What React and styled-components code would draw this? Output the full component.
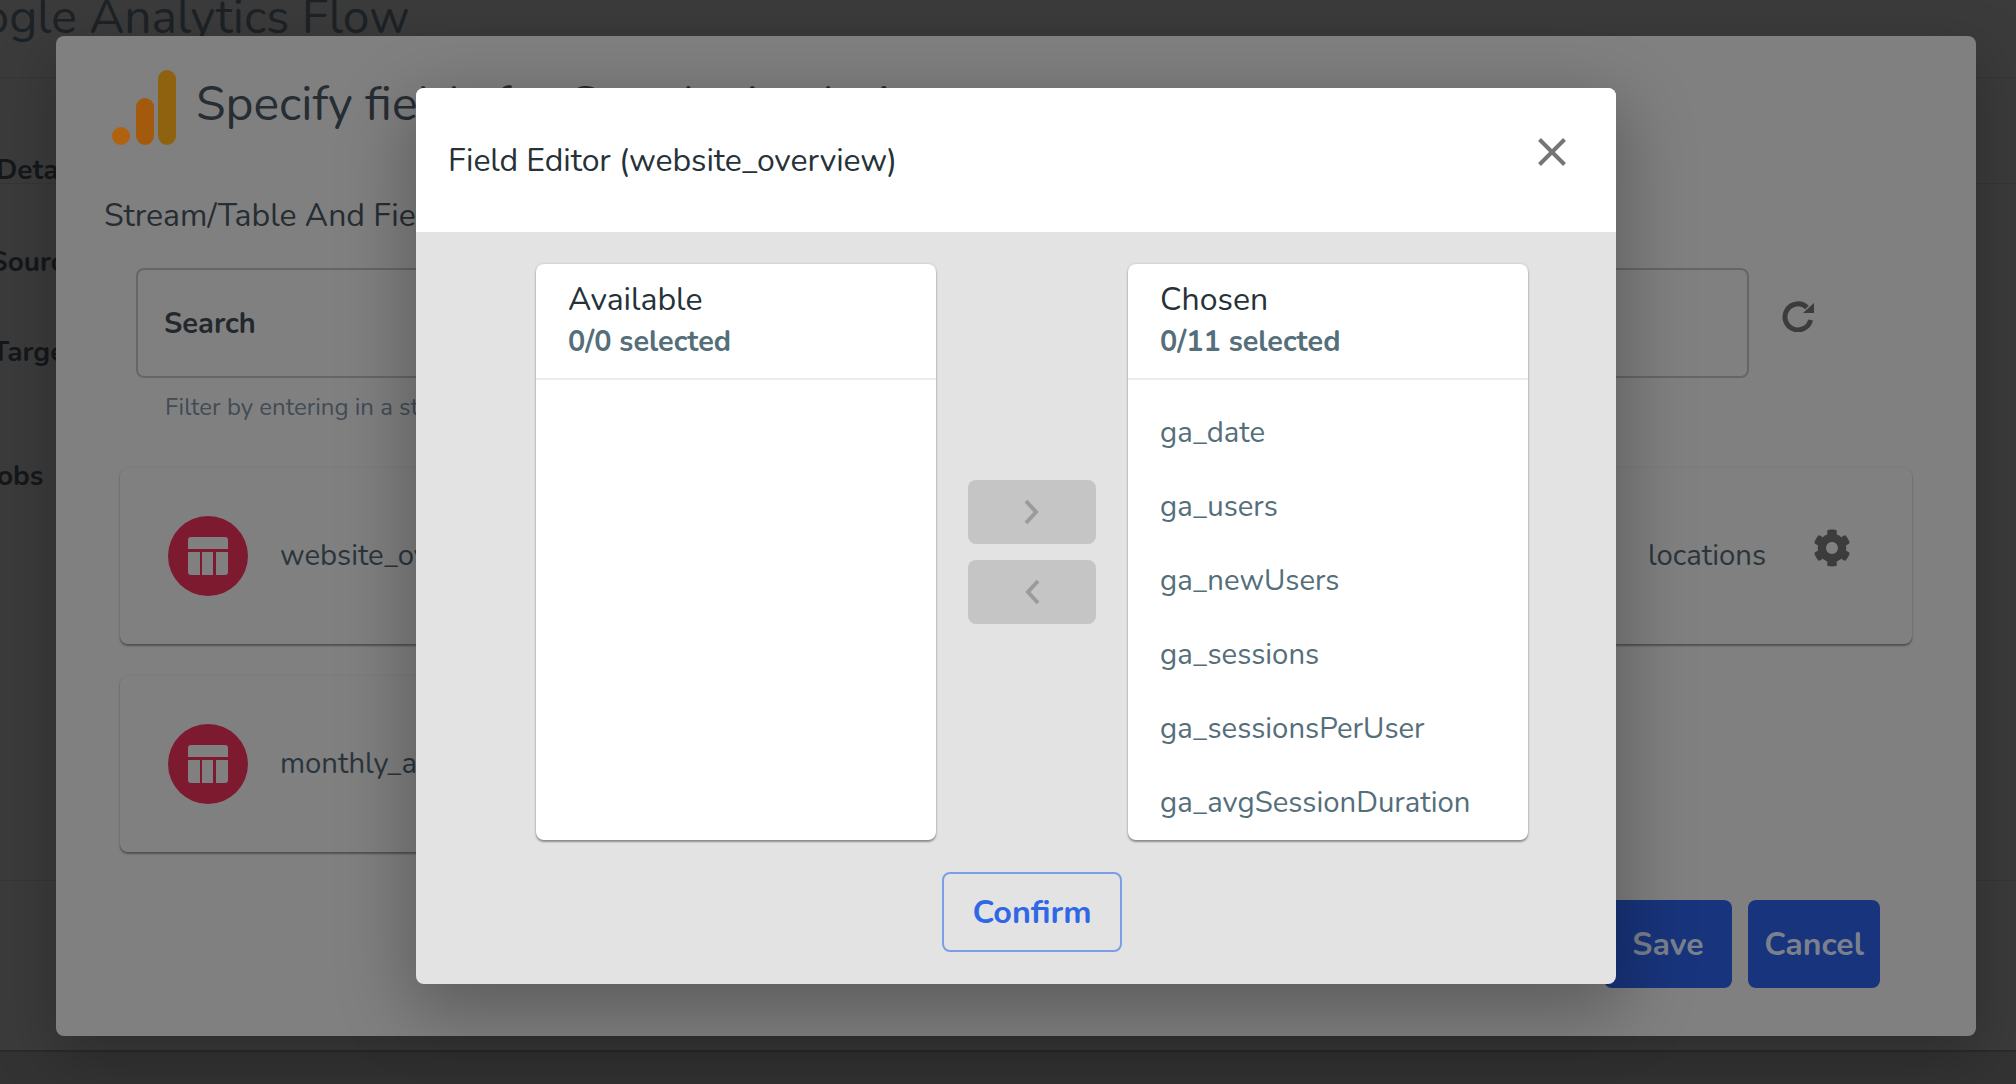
import React from 'react';
import styled, { createGlobalStyle } from 'styled-components';
import { FaCog } from 'react-icons/fa';

const FONT = `"Nunito", "Lato", "Noto Sans", sans-serif`;

const Global = createGlobalStyle`
  html, body { margin: 0; padding: 0; height: 100%; overflow: hidden; background: #3a3a3a; }
  #root { height: 100%; }
  * { box-sizing: border-box; }
`;

const Viewport = styled.div`
  position: relative;
  width: 2016px;
  height: 1084px;
  overflow: hidden;
  background: #3b3b3b;
  font-family: ${FONT};
`;

const PageTitle = styled.h1`
  position: absolute;
  left: -79px;
  top: -17px;
  margin: 0;
  font-size: 48px;
  line-height: 68px;
  font-weight: 400;
  color: #1d2226;
  white-space: nowrap;
`;

const PageRule = styled.div`
  position: absolute;
  left: 0;
  right: 0;
  top: ${p => p.$y}px;
  height: 1px;
  background: #363636;
`;

const SideNav = styled.nav`
  position: absolute;
  left: 0;
  top: 0;
  width: 70px;
  font-size: 28px;
  font-weight: 700;
  color: #14181b;
  white-space: nowrap;
`;

const SideItem = styled.div`
  position: absolute;
  left: ${p => p.$x}px;
  top: ${p => p.$y - 20}px;
  line-height: 40px;
`;

const BottomBar = styled.div`
  position: absolute;
  left: 0;
  right: 0;
  top: 1050px;
  bottom: 0;
  background: #333;
  border-top: 2px solid #2a2a2a;
`;

const FlowModal = styled.section`
  position: absolute;
  left: 56px;
  top: 36px;
  width: 1920px;
  height: 1000px;
  background: #808080;
  border-radius: 8px;
  box-shadow: 0 20px 60px rgba(0,0,0,.25);
  padding: 34px 64px 0 48px;
`;

const ModalHead = styled.div`
  display: flex;
  align-items: center;
  gap: 20px;
  margin-left: 8px;
  height: 74px;
`;

const ModalTitle = styled.h2`
  margin: -6px 0 0;
  font-size: 48px;
  font-weight: 400;
  color: #262d33;
  white-space: nowrap;
`;

const SectionLabel = styled.h3`
  margin: 52px 0 0;
  font-size: 32px;
  line-height: 40px;
  font-weight: 400;
  color: #262d33;
`;

const SearchRow = styled.div`
  display: flex;
  align-items: flex-start;
  gap: 33px;
  margin: 32px 0 0 32px;
`;

const SearchBox = styled.div`
  width: 1613px;
  height: 110px;
  border: 2px solid #666;
  border-radius: 8px;
  padding: 0 26px;
  display: flex;
  align-items: center;
  font-size: 29px;
  font-weight: 700;
  color: #22282d;
`;

const RefreshIcon = styled.svg`
  width: 32px;
  height: 32px;
  margin-top: 32px;
  flex: none;
`;

const Helper = styled.div`
  margin: 13px 0 0 61px;
  font-size: 24px;
  line-height: 32px;
  color: #414c56;
`;

const Card = styled.article`
  position: relative;
  margin: ${p => p.$mt}px 0 0 16px;
  width: ${p => p.$w}px;
  height: ${p => p.$h}px;
  border-radius: 8px;
  background: #808080;
  box-shadow: 0 2px 2px rgba(0,0,0,.35), 0 0 2px rgba(0,0,0,.1);
  display: flex;
  align-items: center;
  padding: 0 48px;
`;

const Badge = styled.div`
  width: 80px;
  height: 80px;
  flex: none;
  border-radius: 50%;
  background: #7d1a2f;
  display: flex;
  align-items: center;
  justify-content: center;
`;

const CardName = styled.div`
  margin-left: 32px;
  padding-bottom: 2px;
  font-size: 29.3px;
  color: #2b353d;
  white-space: nowrap;
  flex: 1;
`;

const CardMeta = styled.div`
  padding-bottom: 2px;
  font-size: 29.3px;
  color: #2b353d;
`;

const Gear = styled(FaCog)`
  width: 38px;
  height: 38px;
  margin: 0 13px 0 47px;
  position: relative;
  top: -8px;
  color: #3c3c3c;
`;

const ActionRow = styled.div`
  position: absolute;
  right: 96px;
  bottom: 48px;
  display: flex;
  gap: 16px;
`;

const ActionButton = styled.button`
  height: 88px;
  width: ${p => p.$w}px;
  border: 0;
  border-radius: 8px;
  background: #18347c;
  color: #7a808c;
  font-family: ${FONT};
  font-size: 32px;
  font-weight: 700;
`;

const Dialog = styled.div`
  position: absolute;
  left: 416px;
  top: 88px;
  width: 1200px;
  height: 896px;
  border-radius: 8px;
  overflow: hidden;
  background: #e3e3e3;
  display: flex;
  flex-direction: column;
`;

const DialogShadow = styled.div`
  position: absolute;
  left: 416px;
  top: 88px;
  width: 1200px;
  height: 896px;
  border-radius: 8px;
  box-shadow: 0 22px 70px 8px rgba(0,0,0,.28);
`;

const DialogHeader = styled.header`
  height: 144px;
  flex: none;
  background: #fff;
  display: flex;
  align-items: center;
  justify-content: space-between;
  padding: 0 48px 0 32px;
`;

const DialogTitle = styled.div`
  font-size: 32px;
  letter-spacing: -0.08px;
  color: #263238;
`;

const CloseIcon = styled.svg`
  width: 48px;
  height: 48px;
  position: relative;
  top: -8px;
  margin-right: -8px;
`;

const DialogBody = styled.div`
  flex: 1;
  padding: 32px 32px 32px 64px;
  display: flex;
  flex-direction: column;
  align-items: center;
`;

const Transfer = styled.div`
  display: grid;
  grid-template-columns: 400px 128px 400px;
  column-gap: 32px;
  height: 576px;
  align-items: center;
`;

const Panel = styled.div`
  height: 576px;
  align-self: stretch;
  background: #fff;
  border-radius: 8px;
  box-shadow: 0 2px 2px rgba(0,0,0,.35), 0 0 3px rgba(0,0,0,.16);
  overflow: hidden;
  display: flex;
  flex-direction: column;
`;

const PanelHeader = styled.div`
  height: 116px;
  flex: none;
  padding: 16px 32px 0;
  border-bottom: 2px solid #ececec;
`;

const PanelTitle = styled.div`
  font-size: 32px;
  line-height: 40px;
  color: #263238;
`;

const PanelCount = styled.div`
  font-size: 28.8px;
  line-height: 40px;
  margin-top: 2px;
  font-weight: 700;
  color: #546e7a;
`;

const List = styled.ul`
  list-style: none;
  margin: 0;
  padding: 15px 0 0;
  overflow: hidden;
`;

const Item = styled.li`
  height: 74px;
  line-height: 74px;
  padding: 0 32px;
  font-size: 29.3px;
  color: #546e7a;
  white-space: nowrap;
`;

const Arrows = styled.div`
  display: flex;
  flex-direction: column;
  gap: 16px;
`;

const ArrowButton = styled.button`
  width: 128px;
  height: 64px;
  border: 0;
  border-radius: 8px;
  background: #c5c5c5;
  display: flex;
  align-items: center;
  justify-content: center;
  padding: 0;
`;

const Confirm = styled.button`
  margin-top: 32px;
  width: 180px;
  height: 80px;
  border: 2px solid #7b9ee8;
  border-radius: 8px;
  background: transparent;
  color: #2f67e6;
  font-family: ${FONT};
  font-size: 32.3px;
  font-weight: 700;
`;

const TableGlyph = () => (
  <svg width="40" height="38" viewBox="0 0 40 38" fill="#808080">
    <path d="M3 0h34a3 3 0 0 1 3 3v9H0V3a3 3 0 0 1 3-3z" />
    <path d="M0 15h12v23H3a3 3 0 0 1-3-3z" />
    <rect x="14" y="15" width="11" height="23" />
    <path d="M28 15h12v20a3 3 0 0 1-3 3h-9z" />
  </svg>
);

const Chevron = ({ left }) => (
  <svg width="20" height="28" viewBox="0 0 20 28" fill="none" stroke="#9b9b9b" strokeWidth="4">
    <path d={left ? 'M16 3 L6 14 L16 25' : 'M4 3 L14 14 L4 25'} />
  </svg>
);

const GaLogo = () => (
  <svg width="64" height="75" viewBox="0 0 64 75">
    <rect x="46" y="0" width="18" height="75" rx="9" fill="#8f6210" />
    <rect x="24" y="28" width="18" height="47" rx="9" fill="#a35a0c" />
    <circle cx="9" cy="66" r="9" fill="#b0620f" />
  </svg>
);

const fields = ['ga_date', 'ga_users', 'ga_newUsers', 'ga_sessions', 'ga_sessionsPerUser', 'ga_avgSessionDuration', 'ga_avgTimeOnPage'];

export default function App() {
  return (
    <Viewport>
      <Global />
      <PageTitle>Google Analytics Flow</PageTitle>
      <PageRule $y={77} />
      <PageRule $y={183} />
      <PageRule $y={880} />
      <SideNav>
        <SideItem $x={-4} $y={170}>Details</SideItem>
        <SideItem $x={-10} $y={262}>Sources</SideItem>
        <SideItem $x={-8} $y={352}>Targets</SideItem>
        <SideItem $x={-13} $y={476}>Jobs</SideItem>
      </SideNav>
      <BottomBar />
      <FlowModal>
        <ModalHead>
          <GaLogo />
          <ModalTitle>Specify fields for Google Analytics</ModalTitle>
        </ModalHead>
        <SectionLabel>Stream/Table And Fields</SectionLabel>
        <SearchRow>
          <SearchBox>Search</SearchBox>
          <RefreshIcon viewBox="0 0 32 32">
            <path d="M25 7.5A13 13 0 1 0 28.6 20" fill="none" stroke="#3c3c3c" strokeWidth="5" />
            <path d="M21 13 L32 13 L32 3 Z" fill="#3c3c3c" />
          </RefreshIcon>
        </SearchRow>
        <Helper>Filter by entering in a string</Helper>
        <Card $mt={45} $w={1792} $h={176}>
          <Badge><TableGlyph /></Badge>
          <CardName>website_overview</CardName>
          <CardMeta>locations</CardMeta>
          <Gear />
        </Card>
        <Card $mt={32} $w={1000} $h={176}>
          <Badge><TableGlyph /></Badge>
          <CardName>monthly_active_users</CardName>
        </Card>
        <ActionRow>
          <ActionButton $w={128}>Save</ActionButton>
          <ActionButton $w={132}>Cancel</ActionButton>
        </ActionRow>
      </FlowModal>
      <DialogShadow />
      <Dialog>
        <DialogHeader>
          <DialogTitle>Field Editor (website_overview)</DialogTitle>
          <CloseIcon viewBox="0 0 48 48" fill="none" stroke="#757575" strokeWidth="4">
            <path d="M11.5 11.5 L36.5 36.5 M36.5 11.5 L11.5 36.5" />
          </CloseIcon>
        </DialogHeader>
        <DialogBody>
          <Transfer>
            <Panel>
              <PanelHeader>
                <PanelTitle>Available</PanelTitle>
                <PanelCount>0/0 selected</PanelCount>
              </PanelHeader>
            </Panel>
            <Arrows>
              <ArrowButton><Chevron /></ArrowButton>
              <ArrowButton><Chevron left /></ArrowButton>
            </Arrows>
            <Panel>
              <PanelHeader>
                <PanelTitle>Chosen</PanelTitle>
                <PanelCount>0/11 selected</PanelCount>
              </PanelHeader>
              <List>
                {fields.map(f => <Item key={f}>{f}</Item>)}
              </List>
            </Panel>
          </Transfer>
          <Confirm>Confirm</Confirm>
        </DialogBody>
      </Dialog>
    </Viewport>
  );
}
